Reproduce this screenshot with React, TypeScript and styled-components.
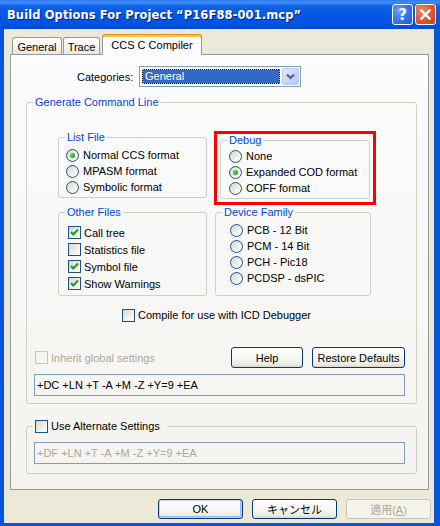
import React from 'react';
import styled, { createGlobalStyle } from 'styled-components';

const GlobalStyle = createGlobalStyle`
    html, body {
        margin: 0;
        padding: 0;
    }
    body {
        width: 440px;
        height: 526px;
        overflow: hidden;
        background: #ECE9D8;
        font-family: "Liberation Sans", Arial, "Noto Sans CJK JP", sans-serif;
        font-size: 11px;
        color: #000;
    }
`;

const Window = styled.div`
    width: 440px;
    height: 526px;
    box-sizing: border-box;
    display: flex;
    flex-direction: column;
    background: #0855DD;
`;

const TitleBar = styled.div`
    height: 29px;
    flex: none;
    display: flex;
    align-items: center;
    gap: 2px;
    padding: 0 4px 0 7px;
    background: linear-gradient(180deg, #2C79F2 0%, #3D8DF8 7%, #0F60E6 22%, #0357E4 55%, #0254E0 85%, #0049CC 100%);
`;

const TitleText = styled.div`
    flex: 1;
    color: #fff;
    font-family: "DejaVu Sans", Verdana, sans-serif;
    font-weight: bold;
    font-size: 11.5px;
    letter-spacing: 0.1px;
    text-shadow: 1px 1px 0 #0A1E8C;
    white-space: nowrap;
    padding-top: 1px;
`;

const CaptionButton = styled.div<{ $close?: boolean }>`
    width: 21px;
    height: 21px;
    box-sizing: border-box;
    border: 1px solid #fff;
    border-radius: 3px;
    display: flex;
    align-items: center;
    justify-content: center;
    color: #fff;
    font-family: "DejaVu Sans", sans-serif;
    font-weight: bold;
    font-size: 15px;
    background: ${p => p.$close
        ? 'radial-gradient(circle at 30% 30%, #F08A66 0%, #E25A30 45%, #C7401A 100%)'
        : 'radial-gradient(circle at 30% 30%, #6FA2FB 0%, #3C78F0 45%, #1F55D8 100%)'};
`;

const Body = styled.div`
    flex: 1;
    margin: 0 6px 3px 4px;
    background: #ECE9D8;
    padding-left: 6px;
    display: flex;
    flex-direction: column;
`;

const TabStrip = styled.div`
    height: 25px;
    flex: none;
    display: flex;
    align-items: flex-end;
    padding-left: 2px;
`;

const Tab = styled.div<{ $active?: boolean; $w: number; $gap: number }>`
    width: ${p => p.$w}px;
    margin-left: ${p => p.$gap}px;
    box-sizing: border-box;
    height: ${p => (p.$active ? 21 : 17)}px;
    margin-bottom: ${p => (p.$active ? -1 : 0)}px;
    position: relative;
    z-index: ${p => (p.$active ? 2 : 1)};
    border: 1px solid #919B9C;
    border-bottom: none;
    border-top: ${p => (p.$active ? '1px solid #E68B2C' : '1px solid #919B9C')};
    border-radius: 3px 3px 0 0;
    box-shadow: ${p => (p.$active ? 'inset 0 2px 0 #FFC73C' : 'none')};
    background: ${p => (p.$active ? '#FCFCFE' : 'linear-gradient(180deg, #FFFFFF 0%, #F3F3EF 60%, #E8E7E1 100%)')};
    display: flex;
    align-items: center;
    justify-content: center;
    padding-top: ${p => (p.$active ? 0 : 2)}px;
    white-space: nowrap;
`;

const TabPage = styled.div`
    width: 419px;
    height: 436px;
    flex: none;
    box-sizing: border-box;
    border: 1px solid #919B9C;
    background: linear-gradient(180deg, #FCFCFE 0%, #F4F3EE 100%);
    display: flex;
    flex-direction: column;
    align-items: flex-start;
`;

const CategoriesRow = styled.div`
    margin-top: 11px;
    padding-left: 66px;
    display: flex;
    align-items: center;
`;

const Label = styled.span`
    width: 62px;
`;

const Combo = styled.div`
    width: 162px;
    height: 21px;
    box-sizing: border-box;
    border: 1px solid #7F9DB9;
    background: #fff;
    display: flex;
    padding: 1px;
`;

const ComboValue = styled.div`
    flex: 1;
    margin: 1px 2px 1px 1px;
    border: 1px dotted #FFC400;
    background: linear-gradient(#316AC5, #316AC5) padding-box, #000 border-box;
    color: #fff;
    padding-left: 2px;
    line-height: 13px;
`;

const ComboButton = styled.div`
    width: 17px;
    box-sizing: border-box;
    border: 1px solid #B9CBF3;
    border-radius: 2px;
    background: linear-gradient(135deg, #E2EAFE 0%, #C4D4FB 60%, #B0C5F6 100%);
    display: flex;
    align-items: center;
    justify-content: center;
`;

const Group = styled.fieldset<{ $w: number; $h?: number }>`
    margin: 0;
    padding: 0;
    width: ${p => p.$w}px;
    ${p => (p.$h ? `height: ${p.$h}px;` : '')}
    box-sizing: border-box;
    border: 1px solid #D0D0BF;
    border-radius: 3px;
    min-width: 0;
`;

const Legend = styled.legend`
    margin-left: 6px;
    padding: 0 2px;
    color: #0046D5;
    line-height: 13px;
`;

const CheckLegend = styled.legend`
    margin-left: 6px;
    padding: 0 7px 0 2px;
    line-height: 14px;
    display: flex;
    align-items: center;
    gap: 3px;
`;

const OuterGroup = styled(Group)<{ $top: number }>`
    margin: ${p => p.$top}px 0 0 15px;
`;

const OptionGrid = styled.div`
    margin: 22px 0 0 31px;
    display: grid;
    grid-template-columns: 149px 162px;
    grid-template-rows: 74px 90px;
    column-gap: 7px;
    row-gap: 1px;
    align-items: start;
`;

const Highlight = styled.div`
    border: 3px solid #FF0000;
    padding: 0 3px 3px 3px;
    height: 74px;
    box-sizing: border-box;
`;

const OptionList = styled.div<{ $top: number; $left: number; $row: number }>`
    padding: ${p => p.$top}px 0 0 ${p => p.$left}px;
    display: grid;
    grid-auto-rows: ${p => p.$row}px;
`;

const Option = styled.label<{ $gap?: number; $disabled?: boolean }>`
    display: flex;
    align-items: center;
    gap: ${p => p.$gap ?? 4}px;
    white-space: nowrap;
    color: ${p => (p.$disabled ? '#ACA899' : '#000')};
`;

const RadioDot = styled.span<{ $on?: boolean }>`
    width: 13px;
    height: 13px;
    flex: none;
    box-sizing: border-box;
    border-radius: 50%;
    border: 1px solid #1C5180;
    background: linear-gradient(135deg, #D6D6CF 0%, #EFEFEA 55%, #FFFFFF 100%);
    display: flex;
    align-items: center;
    justify-content: center;
    &::after {
        content: '';
        display: ${p => (p.$on ? 'block' : 'none')};
        width: 5px;
        height: 5px;
        border-radius: 50%;
        background: radial-gradient(circle at 35% 35%, #63DB63 0%, #2DAA2D 60%, #1C8C1C 100%);
    }
`;

const CheckBox = styled.span<{ $disabled?: boolean }>`
    width: 13px;
    height: 13px;
    flex: none;
    box-sizing: border-box;
    border: 1px solid ${p => (p.$disabled ? '#CAC8BB' : '#1C5180')};
    background: ${p => (p.$disabled
        ? '#F5F4EE'
        : 'linear-gradient(135deg, #D6D6CF 0%, #EFEFEA 55%, #FFFFFF 100%)')};
    display: flex;
    align-items: center;
    justify-content: center;
`;

const IcdRow = styled.div`
    margin: 11px 0 0 95px;
    height: 16px;
    display: flex;
    align-items: center;
`;

const InheritRow = styled.div`
    margin-top: 24px;
    height: 21px;
    padding: 0 11px 0 8px;
    display: flex;
    align-items: center;
    gap: 9px;
`;

const Spacer = styled.div`
    flex: 1;
`;

const Button = styled.button<{ $w: number; $h?: number; $default?: boolean }>`
    width: ${p => p.$w}px;
    height: ${p => p.$h ?? 21}px;
    box-sizing: border-box;
    margin: 0;
    padding: 0;
    border: 1px solid #003C74;
    border-radius: 3px;
    background: linear-gradient(180deg, #FFFFFF 0%, #F6F6F2 55%, #ECEBE4 85%, #D9D7CC 100%);
    box-shadow: ${p => (p.$default ? 'inset 0 0 0 1px #C3D5FD, inset -1px -1px 0 1px #9AB6EC' : 'none')};
    font-family: "Liberation Sans", Arial, "Noto Sans CJK JP", sans-serif;
    font-size: 11px;
    color: #000;
    &:disabled {
        border-color: #C9C7BA;
        background: #F5F4EA;
        color: #ACA899;
    }
`;

const TextField = styled.div<{ $muted?: boolean }>`
    margin: ${p => (p.$muted ? 9 : 6)}px 11px 0 7px;
    height: 22px;
    box-sizing: border-box;
    border: 1px solid #7F9DB9;
    padding-left: 2px;
    display: flex;
    align-items: center;
    color: ${p => (p.$muted ? '#ACA899' : '#000')};
    white-space: nowrap;
`;

const ButtonRow = styled.div`
    margin-top: 9px;
    padding-right: 3px;
    display: flex;
    justify-content: flex-end;
    gap: 9px;
`;

const Tick = () => (
    <svg width="11" height="11" viewBox="0 0 11 11">
        <polyline points="2,5 4.3,7.5 9,2.5" fill="none" stroke="#21A121" strokeWidth="2.2" />
    </svg>
);

const Radio = ({ on, children }: { on?: boolean; children: React.ReactNode }) => (
    <Option>
        <RadioDot $on={on} />
        {children}
    </Option>
);

const Check = ({ on, disabled, children }: { on?: boolean; disabled?: boolean; children: React.ReactNode }) => (
    <Option $gap={3} $disabled={disabled}>
        <CheckBox $disabled={disabled}>{on && <Tick />}</CheckBox>
        {children}
    </Option>
);

export default function App() {
    return (
        <>
            <GlobalStyle />
            <Window>
                <TitleBar>
                    <TitleText>Build Options For Project “P16F88-001.mcp”</TitleText>
                    <CaptionButton>?</CaptionButton>
                    <CaptionButton $close>
                        <svg width="13" height="13" viewBox="0 0 13 13">
                            <path d="M2.5 2.5 L10.5 10.5 M10.5 2.5 L2.5 10.5" stroke="#fff" strokeWidth="2.4" strokeLinecap="square" />
                        </svg>
                    </CaptionButton>
                </TitleBar>
                <Body>
                    <TabStrip>
                        <Tab $w={50} $gap={0}>General</Tab>
                        <Tab $w={37} $gap={1}>Trace</Tab>
                        <Tab $w={100} $gap={2} $active>CCS C Compiler</Tab>
                    </TabStrip>
                    <TabPage>
                        <CategoriesRow>
                            <Label>Categories:</Label>
                            <Combo>
                                <ComboValue>General</ComboValue>
                                <ComboButton>
                                    <svg width="9" height="7" viewBox="0 0 9 7">
                                        <polyline points="1,1.5 4.5,5 8,1.5" fill="none" stroke="#4D6185" strokeWidth="2" />
                                    </svg>
                                </ComboButton>
                            </Combo>
                        </CategoriesRow>

                        <OuterGroup $w={391} $top={9}>
                            <Legend>Generate Command Line</Legend>
                            <OptionGrid>
                                <Group $w={149} $h={67}>
                                    <Legend>List File</Legend>
                                    <OptionList $top={3} $left={7} $row={16}>
                                        <Radio on>Normal CCS format</Radio>
                                        <Radio>MPASM format</Radio>
                                        <Radio>Symbolic format</Radio>
                                    </OptionList>
                                </Group>
                                <Highlight>
                                    <Group $w={150} $h={65}>
                                        <Legend>Debug</Legend>
                                        <OptionList $top={1} $left={8} $row={16}>
                                            <Radio>None</Radio>
                                            <Radio on>Expanded COD format</Radio>
                                            <Radio>COFF format</Radio>
                                        </OptionList>
                                    </Group>
                                </Highlight>
                                <Group $w={149} $h={90}>
                                    <Legend>Other Files</Legend>
                                    <OptionList $top={5} $left={9} $row={17}>
                                        <Check on>Call tree</Check>
                                        <Check>Statistics file</Check>
                                        <Check on>Symbol file</Check>
                                        <Check on>Show Warnings</Check>
                                    </OptionList>
                                </Group>
                                <Group $w={156} $h={90} style={{ marginLeft: 1 }}>
                                    <Legend>Device Family</Legend>
                                    <OptionList $top={3} $left={14} $row={16}>
                                        <Radio>PCB - 12 Bit</Radio>
                                        <Radio>PCM - 14 Bit</Radio>
                                        <Radio>PCH - Pic18</Radio>
                                        <Radio>PCDSP - dsPIC</Radio>
                                    </OptionList>
                                </Group>
                            </OptionGrid>
                            <IcdRow>
                                <Check>Compile for use with ICD Debugger</Check>
                            </IcdRow>
                            <InheritRow>
                                <Check disabled>Inherit global settings</Check>
                                <Spacer />
                                <Button $w={72}>Help</Button>
                                <Button $w={93}>Restore Defaults</Button>
                            </InheritRow>
                            <TextField>+DC +LN +T -A +M -Z +Y=9 +EA</TextField>
                            <div style={{ height: 7 }} />
                        </OuterGroup>

                        <OuterGroup $w={391} $top={15}>
                            <CheckLegend>
                                <CheckBox />
                                Use Alternate Settings
                            </CheckLegend>
                            <TextField $muted>+DF +LN +T -A +M -Z +Y=9 +EA</TextField>
                            <div style={{ height: 9 }} />
                        </OuterGroup>
                    </TabPage>
                    <ButtonRow>
                        <Button $w={85} $h={20} $default>OK</Button>
                        <Button $w={85} $h={20}>キャンセル</Button>
                        <Button $w={85} $h={20} disabled>適用(<u>A</u>)</Button>
                    </ButtonRow>
                </Body>
            </Window>
        </>
    );
}
